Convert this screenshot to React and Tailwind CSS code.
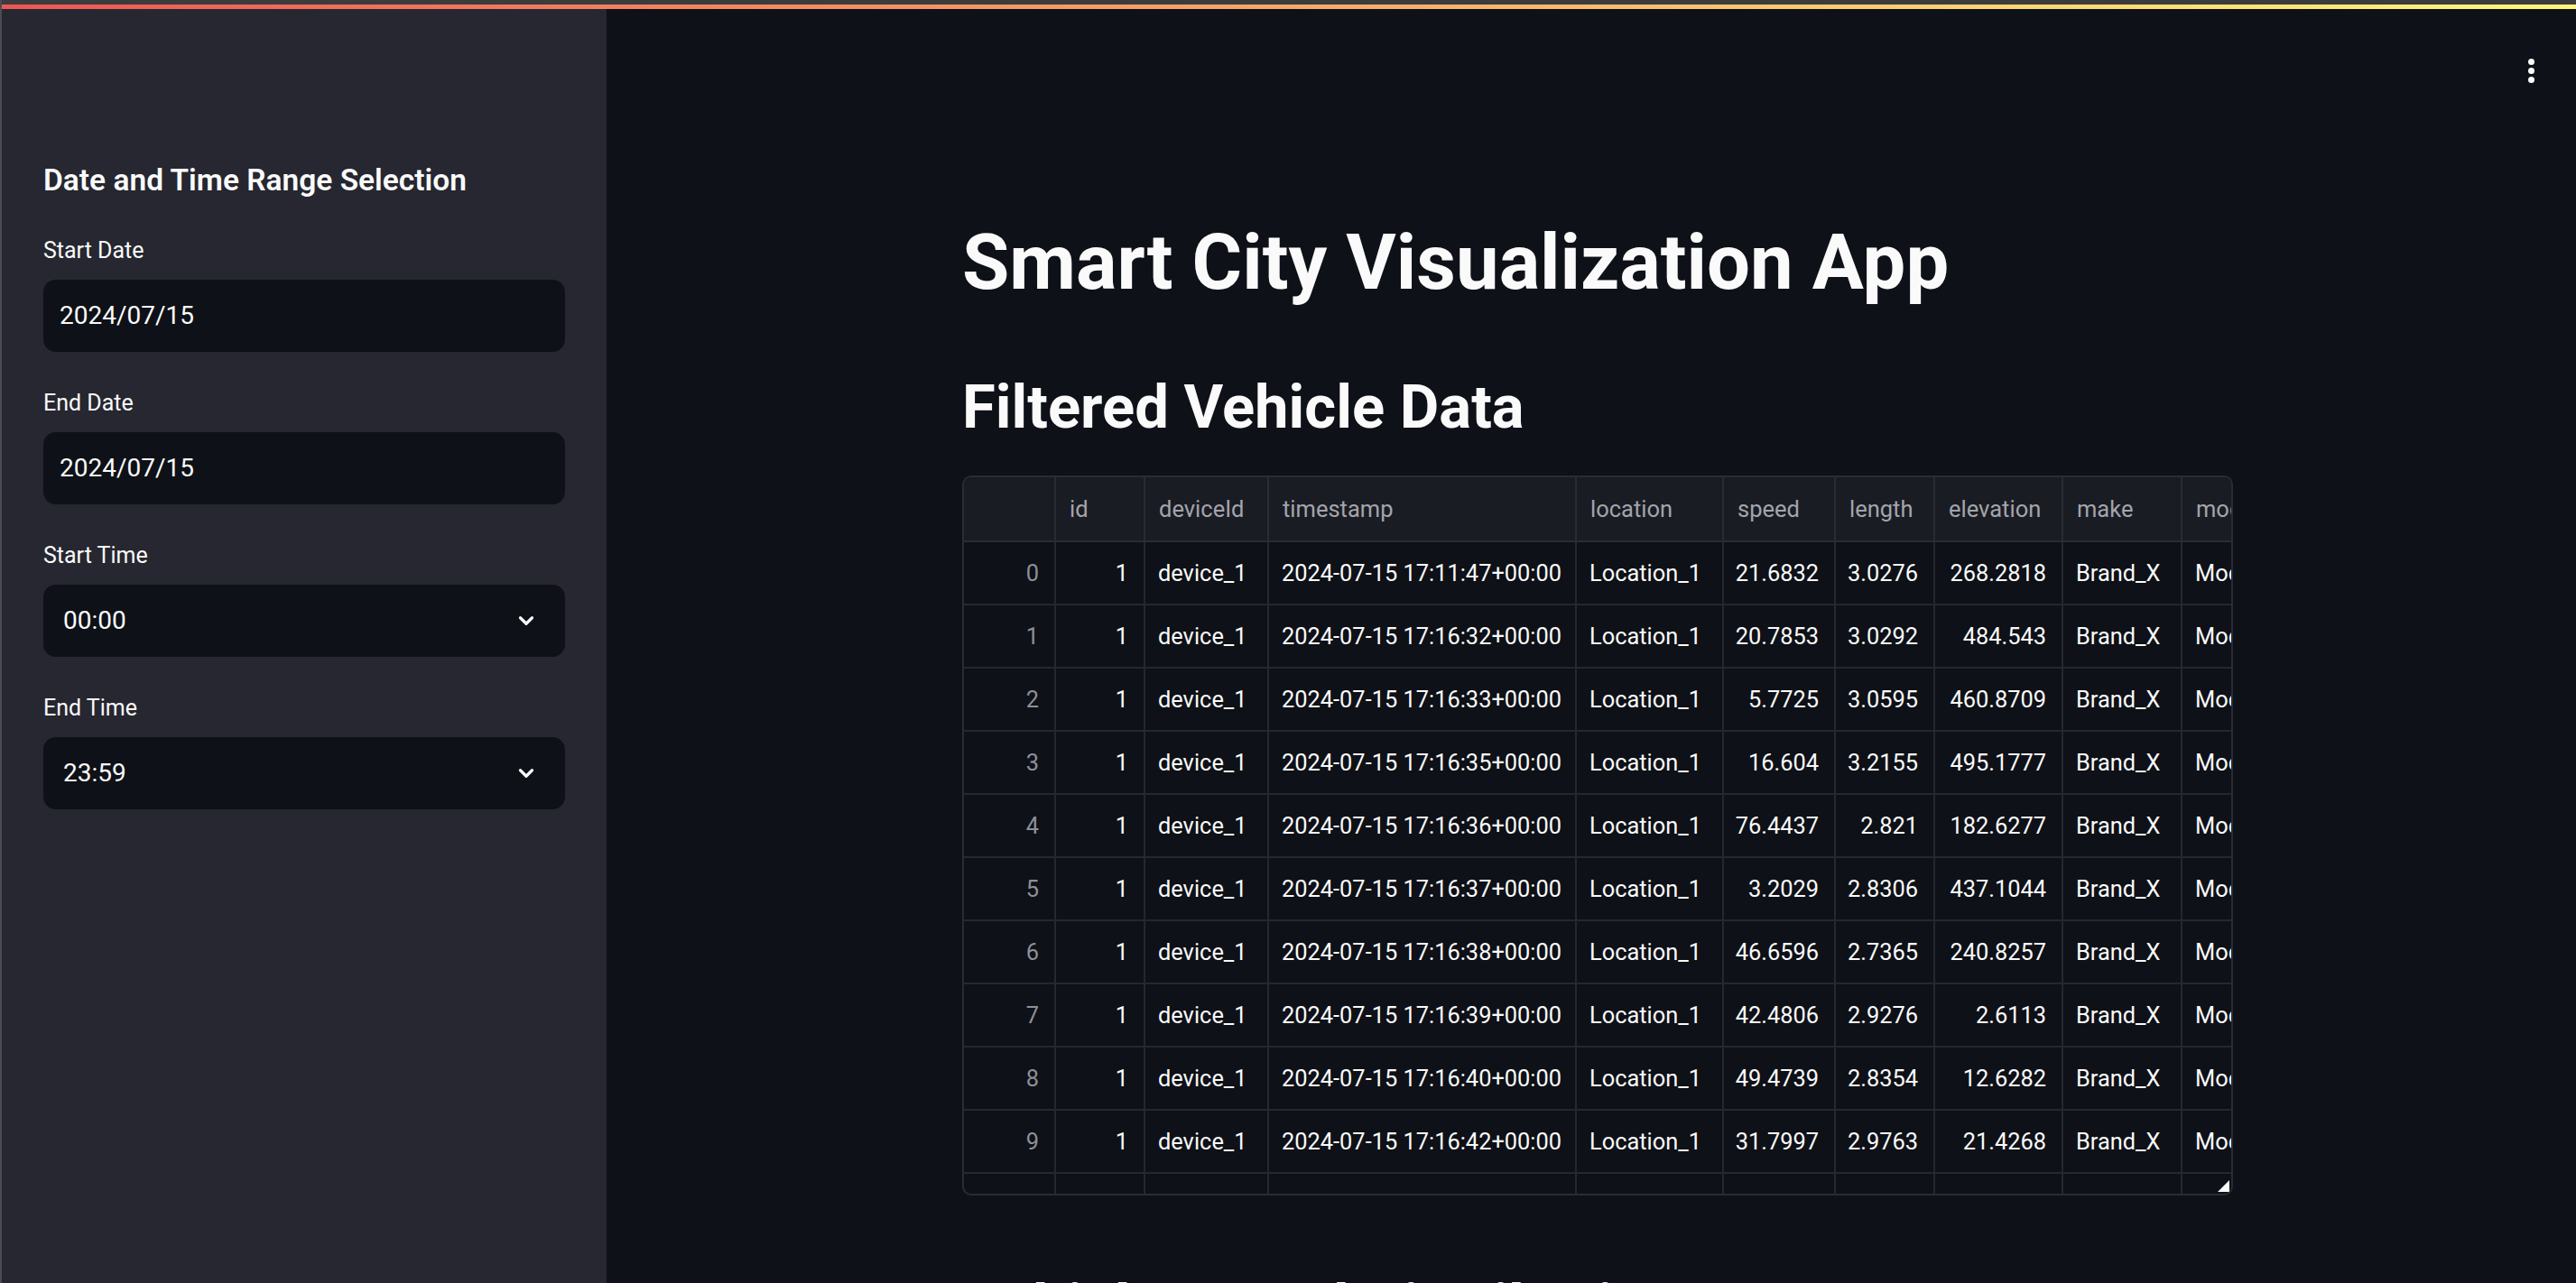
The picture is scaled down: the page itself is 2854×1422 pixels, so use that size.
import { ChevronDown } from 'lucide-react';

const COLS = [
  { key: 'idx', label: '', w: 'w-[102px]', right: true, dim: true },
  { key: 'id', label: 'id', w: 'w-[99px]', right: true },
  { key: 'deviceId', label: 'deviceId', w: 'w-[137px]' },
  { key: 'timestamp', label: 'timestamp', w: 'w-[341px]' },
  { key: 'location', label: 'location', w: 'w-[163px]' },
  { key: 'speed', label: 'speed', w: 'w-[124px]', right: true },
  { key: 'length', label: 'length', w: 'w-[110px]', right: true },
  { key: 'elevation', label: 'elevation', w: 'w-[142px]', right: true },
  { key: 'make', label: 'make', w: 'w-[132px]' },
  { key: 'model', label: 'model', w: 'w-[170px]' },
];

const RAW = [
  ['17:11:47', '21.6832', '3.0276', '268.2818'],
  ['17:16:32', '20.7853', '3.0292', '484.543'],
  ['17:16:33', '5.7725', '3.0595', '460.8709'],
  ['17:16:35', '16.604', '3.2155', '495.1777'],
  ['17:16:36', '76.4437', '2.821', '182.6277'],
  ['17:16:37', '3.2029', '2.8306', '437.1044'],
  ['17:16:38', '46.6596', '2.7365', '240.8257'],
  ['17:16:39', '42.4806', '2.9276', '2.6113'],
  ['17:16:40', '49.4739', '2.8354', '12.6282'],
  ['17:16:42', '31.7997', '2.9763', '21.4268'],
  ['17:16:43', '11.7044', '2.7961', '271.1261'],
];

const ROWS = RAW.map(([t, speed, length, elevation], i) => ({
  idx: String(i),
  id: '1',
  deviceId: 'device_1',
  timestamp: `2024-07-15 ${t}+00:00`,
  location: 'Location_1',
  speed,
  length,
  elevation,
  make: 'Brand_X',
  model: 'Model_A',
}));

function Field({ label, value, select }) {
  return (
    <div className="flex flex-col">
      <div className="h-[40px] flex items-center text-[25px] text-[#fafafa]">{label}</div>
      <div className={`mt-[12px] h-[80px] rounded-[14px] bg-[#0e1117] flex items-center justify-between text-[28px] text-[#fafafa] ${select ? 'pl-[22px] pr-[30px]' : 'px-[18px]'}`}>
        <span>{value}</span>
        {select && <ChevronDown size={26} strokeWidth={3} className="text-[#fafafa]" />}
      </div>
    </div>
  );
}

function DataTable() {
  return (
    <div className="relative w-[1408px] h-[798px] rounded-[10px] border-2 border-[#2a2c35] overflow-hidden bg-[#0e1117]">
      <div className="flex flex-col w-[1600px]">
        <div className="flex h-[72px] bg-[#1a1c24]">
          {COLS.map(c => (
            <div key={c.key} className={`${c.w} shrink-0 h-full flex items-center px-[15px] border-r-2 border-b-2 border-[#2a2c35] whitespace-nowrap overflow-hidden text-[25.5px] text-[#a3a5ab]`}>
              {c.label}
            </div>
          ))}
        </div>
        {ROWS.map(r => (
          <div key={r.idx} className="flex h-[70px]">
            {COLS.map(c => (
              <div
                key={c.key}
                className={`${c.w} shrink-0 h-full flex items-center px-[14px] border-r-2 border-b-2 border-[#262730] whitespace-nowrap overflow-hidden text-[25.4px] ${c.right ? 'justify-end pr-[17px]' : 'justify-start'} ${c.dim ? 'text-[#8e9097]' : 'text-[#fafafa]'}`}
              >
                {r[c.key]}
              </div>
            ))}
          </div>
        ))}
      </div>
      {/* resize handle */}
      <svg className="absolute right-[2px] bottom-[2px]" width="13" height="13" viewBox="0 0 13 13">
        <polygon points="13,0 13,13 0,13" fill="#fafafa" />
      </svg>
    </div>
  );
}

export default function App() {
  return (
    <div className="w-[2854px] h-[1422px] overflow-hidden flex flex-col bg-[#0e1117] border-l-2 border-[#4b4b50] font-['Roboto',_'Liberation_Sans',_sans-serif]">
      <div className="h-[5px] bg-[#3c3c3c] shrink-0" />
      <div className="h-[5px] shrink-0 bg-gradient-to-r from-[#ec5656] via-[#f6a86a] to-[#fdf77c]" />
      <div className="flex flex-1 min-h-0">
        {/* SIDEBAR */}
        <aside className="w-[670px] shrink-0 bg-[#262730] px-[46px] pt-[170px]">
          <h2 className="text-[33.5px] leading-[40px] font-semibold text-[#fafafa]">Date and Time Range Selection</h2>
          <div className="mt-[38px] flex flex-col gap-[37px]">
            <Field label="Start Date" value="2024/07/15" />
            <Field label="End Date" value="2024/07/15" />
            <Field label="Start Time" value="00:00" select />
            <Field label="End Time" value="23:59" select />
          </div>
        </aside>

        {/* MAIN */}
        <main className="relative flex-1 flex justify-center pl-[14px] pt-[230px]">
          <div className="absolute top-[55px] right-[46px] flex flex-col gap-[3px]">
            <span className="w-[7px] h-[7px] rounded-full bg-[#fafafa]" />
            <span className="w-[7px] h-[7px] rounded-full bg-[#fafafa]" />
            <span className="w-[7px] h-[7px] rounded-full bg-[#fafafa]" />
          </div>
          <div className="w-[1408px] flex flex-col">
            <h1 className="text-[85px] leading-[103px] font-bold text-[#fafafa]">Smart City Visualization App</h1>
            <h2 className="mt-[67px] text-[67px] leading-[82px] font-bold text-[#fafafa]">Filtered Vehicle Data</h2>
            <div className="mt-[35px]">
              <DataTable />
            </div>
            <h2 className="mt-[82px] text-[67px] leading-[82px] font-bold text-[#fafafa]">Vehicle Speed Distribution</h2>
          </div>
        </main>
      </div>
    </div>
  );
}
